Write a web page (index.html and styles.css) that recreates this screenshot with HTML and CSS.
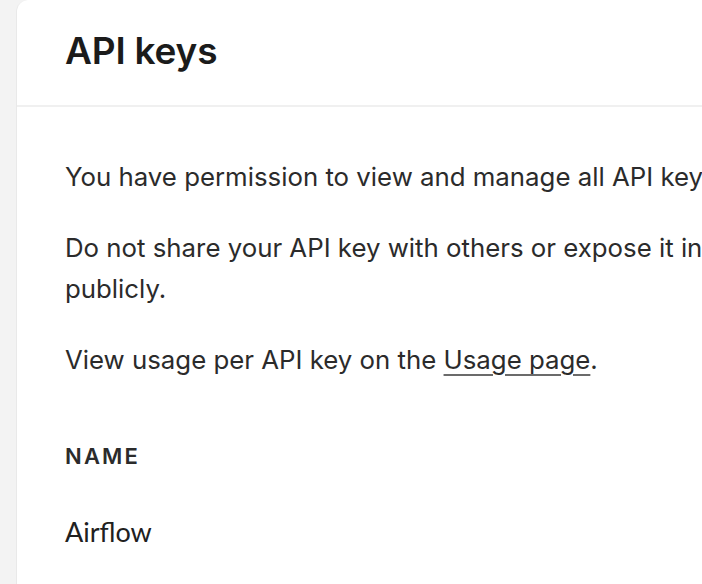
FILE: index.html
```html
<!DOCTYPE html>
<html>
<head>
<meta charset="utf-8">
<link rel="stylesheet" href="styles.css">
</head>
<body>
<div class="page">
  <main class="card">
    <header class="card-header">
      <h1 class="title">API keys</h1>
    </header>
    <section class="card-body">
      <p class="para">You have permission to view and manage all API keys in this project.</p>
      <p class="para">Do not share your API key with others or expose it in the browser or other client-side code. In order to protect the security of your account, OpenAI may automatically disable any API key that has leaked<br>publicly.</p>
      <p class="para">View usage per API key on the <a class="link" href="#">Usage page</a>.</p>
      <div class="table">
        <div class="th">NAME</div>
        <div class="td">Airflow</div>
      </div>
    </section>
  </main>
</div>
</body>
</html>
```

FILE: styles.css
```css
* { box-sizing: border-box; }
html, body { margin: 0; padding: 0; }
body {
  background: #f3f3f3;
  font-family: Inter, "Noto Sans", sans-serif;
  color: #202123;
  width: 702px;
  height: 584px;
  overflow: hidden;
}
.page {
  padding-left: 16px;
  height: 100%;
}
.card {
  background: #fff;
  border-left: 1px solid #e9e9e9;
  border-top-left-radius: 12px;
  height: 100%;
  width: 3000px;
}
.card-header {
  height: 107px;
  border-bottom: 2px solid #f0f0f0;
  padding: 29px 48px 0;
}
.title {
  margin: 0;
  font-size: 37px;
  font-weight: 600;
  line-height: 44px;
  letter-spacing: -0.2px;
  color: #1b1b1b;
}
.card-body {
  padding: 49px 48px 0;
}
.para {
  margin: 0 0 30px;
  font-size: 25.8px;
  line-height: 41px;
  color: #2b2b2b;
  white-space: nowrap;
}
.link {
  color: inherit;
  text-decoration: underline;
  text-decoration-color: #6b6b6b;
  text-underline-offset: 5px;
}
.table { margin-top: 61px; }
.th {
  font-size: 22px;
  font-weight: 600;
  letter-spacing: 2.2px;
  color: #2b2b2b;
  line-height: 30px;
}
.td {
  margin-top: 44px;
  font-family: Lato, "Noto Sans", sans-serif;
  font-size: 27px;
  line-height: 34px;
  color: #202020;
}
```
